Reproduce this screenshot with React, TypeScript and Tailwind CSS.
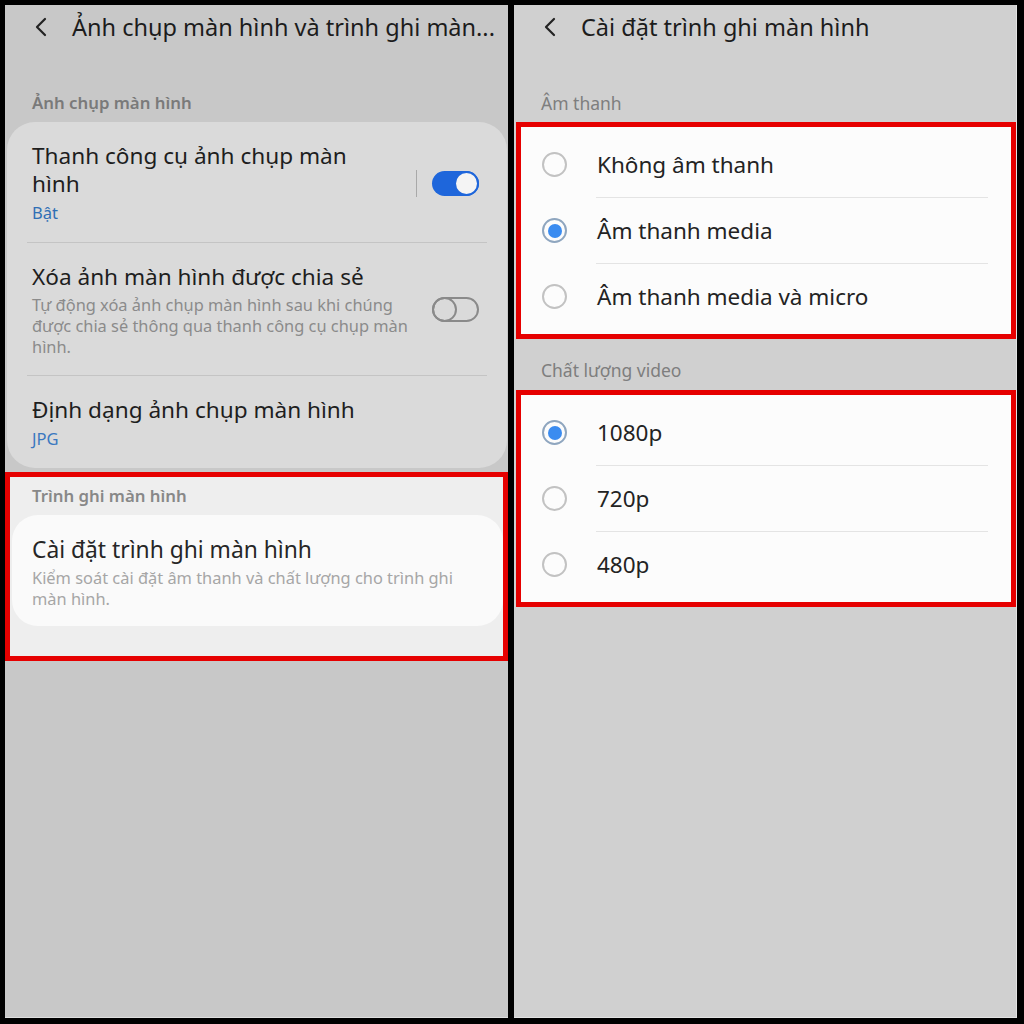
import React from "react";

const font = { fontFamily: '"Noto Sans", "Open Sans", sans-serif' };

function Chevron() {
  return (
    <svg width="14" height="22" viewBox="0 0 14 22" className="shrink-0">
      <path d="M11 3 L3 11 L11 19" fill="none" stroke="#222" strokeWidth="2.2" strokeLinecap="round" strokeLinejoin="round" />
    </svg>
  );
}

function Header({ title }: { title: string }) {
  return (
    <div className="h-[44px] flex items-center pl-[29px]">
      <Chevron />
      <span className="ml-[24px] text-[23.5px] leading-[30px] text-[#1c1c1c] whitespace-nowrap">{title}</span>
    </div>
  );
}

function ToggleOn() {
  return (
    <div className="flex items-center">
      <div className="w-px h-[27px] bg-[#a9a9a9] mr-[15px]" />
      <div className="w-[47px] h-[25px] rounded-full bg-[#1e66db] relative">
        <div className="absolute right-0 top-0 w-[25px] h-[25px] rounded-full bg-[#f4f4f4] border-[2.5px] border-[#1e66db]" />
      </div>
    </div>
  );
}

function ToggleOff() {
  return (
    <div className="w-[47px] h-[25px] rounded-full border-2 border-[#8a8a8a] relative">
      <div className="absolute left-[-2px] top-[-2px] w-[25px] h-[25px] rounded-full border-2 border-[#8a8a8a]" />
    </div>
  );
}

function Radio({ on }: { on?: boolean }) {
  if (on)
    return (
      <div className="w-[25px] h-[25px] rounded-full border-2 border-[#8fa6bf] flex items-center justify-center">
        <div className="w-[14px] h-[14px] rounded-full bg-[#3b8cf0]" />
      </div>
    );
  return <div className="w-[25px] h-[25px] rounded-full border-2 border-[#c2c2c2]" />;
}

function RadioGroup({ items, selected }: { items: string[]; selected: number }) {
  return (
    <div className="ml-[2px] border-[5px] border-[#e60000] bg-[#fcfcfc] pt-[5px] pb-[5px]">
      {items.map((t, i) => (
        <div key={t}>
          {i > 0 && <div className="ml-[75px] mr-[23px] h-px bg-[#e4e4e4]" />}
          <div className="h-[65px] flex items-center">
            <div className="ml-[21px] w-[25px]">
              <Radio on={i === selected} />
            </div>
            <span className="ml-[30px] text-[22.5px] leading-[28px] text-[#232323]">{t}</span>
          </div>
        </div>
      ))}
    </div>
  );
}

export default function App() {
  return (
    <div style={font} className="w-[1024px] h-[1024px] bg-black flex pt-[5px] pl-[5px] gap-[6px] overflow-hidden">
      {/* Left panel */}
      <div className="w-[503px] h-[1013px] bg-[#c8c8c8] flex flex-col border-b border-[#dedede]">
        <Header title="Ảnh chụp màn hình và trình ghi màn..." />
        <div className="mt-[44px] mb-[9px] pl-[27px] text-[16.8px] leading-[20px] font-semibold text-[#7a7a7a]">Ảnh chụp màn hình</div>
        <div className="ml-[2px] mr-px bg-[#dadada] rounded-[28px]">
          <div className="flex items-center pl-[25px] pr-[28px] pt-[20px] pb-[18px]">
            <div className="flex-1">
              <div className="text-[22.6px] leading-[28px] text-[#1e1e1e]">
                Thanh công cụ ảnh chụp màn
                <br />
                hình
              </div>
              <div className="mt-[4px] text-[16.5px] leading-[22px] text-[#2f6fb5]">Bật</div>
            </div>
            <ToggleOn />
          </div>
          <div className="mx-[20px] h-px bg-[#c4c4c4]" />
          <div className="flex items-center pl-[25px] pr-[28px] pt-[20px] pb-[18px]">
            <div className="flex-1">
              <div className="text-[22.6px] leading-[28px] text-[#1e1e1e]">Xóa ảnh màn hình được chia sẻ</div>
              <div className="mt-[3px] text-[16.4px] leading-[21px] text-[#8b8b8b]">
                Tự động xóa ảnh chụp màn hình sau khi chúng
                <br />
                được chia sẻ thông qua thanh công cụ chụp màn
                <br />
                hình.
              </div>
            </div>
            <div className="self-start mt-[34px]">
              <ToggleOff />
            </div>
          </div>
          <div className="mx-[20px] h-px bg-[#c4c4c4]" />
          <div className="pl-[25px] pt-[20px] pb-[18px]">
            <div className="text-[22.6px] leading-[28px] text-[#1e1e1e]">Định dạng ảnh chụp màn hình</div>
            <div className="mt-[4px] text-[16.5px] leading-[22px] text-[#3a78c0]">JPG</div>
          </div>
        </div>
        <div className="mt-[4px] border-[5px] border-[#e60000] bg-[#eeeeee] pt-[9px] pb-[30px]">
          <div className="pl-[22px] text-[16.8px] leading-[20px] font-semibold text-[#888888]">Trình ghi màn hình</div>
          <div className="mt-[9px] ml-[2px] bg-[#fafafa] rounded-[26px] pl-[20px] pt-[21px] pb-[17px]">
            <div className="text-[22.8px] leading-[28px] text-[#262626]">Cài đặt trình ghi màn hình</div>
            <div className="mt-[3px] text-[16.4px] leading-[21px] text-[#a6a6a6]">
              Kiểm soát cài đặt âm thanh và chất lượng cho trình ghi
              <br />
              màn hình.
            </div>
          </div>
        </div>
      </div>

      {/* Right panel */}
      <div className="w-[503px] h-[1013px] bg-[#d0d0d0] flex flex-col border-b border-r border-[#e2e2e2]">
        <Header title="Cài đặt trình ghi màn hình" />
        <div className="mt-[44px] mb-[9px] pl-[27px] text-[17.5px] leading-[20px] text-[#7e7e7e]">Âm thanh</div>
        <RadioGroup items={["Không âm thanh", "Âm thanh media", "Âm thanh media và micro"]} selected={1} />
        <div className="pt-[21px] pb-[10px] pl-[27px] text-[17.5px] leading-[20px] text-[#7e7e7e]">Chất lượng video</div>
        <RadioGroup items={["1080p", "720p", "480p"]} selected={0} />
      </div>
    </div>
  );
}
